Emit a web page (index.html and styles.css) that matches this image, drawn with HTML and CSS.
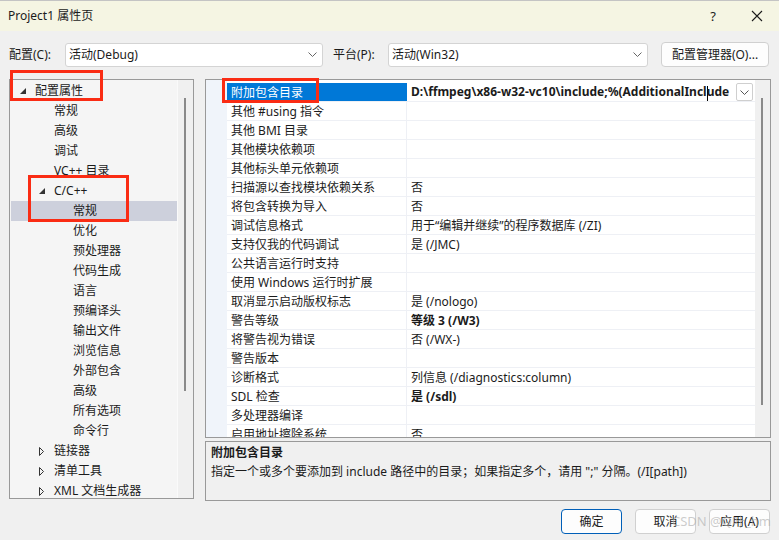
FILE: index.html
```html
<!DOCTYPE html>
<html lang="zh-CN">
<head>
<meta charset="utf-8">
<title>Project1 属性页</title>
<link rel="stylesheet" href="styles.css">
</head>
<body>
<div class="titlebar">
  <span class="title">Project1 属性页</span>
  <span class="tb-btn">?</span>
  <span class="tb-btn"><svg width="12" height="12" viewBox="0 0 12 12"><path d="M1 1L11 11M11 1L1 11" stroke="#1b1b1b" stroke-width="1.1" fill="none"/></svg></span>
</div>
<div class="content">
  <div class="toprow">
    <span class="lbl lbl-cfg">配置(C):</span>
    <div class="combo combo-cfg"><span>活动(Debug)</span><svg class="chev" width="9" height="5" viewBox="0 0 9 5"><path d="M0.5 0.5L4.5 4.5L8.5 0.5" stroke="#666" fill="none"/></svg></div>
    <span class="lbl lbl-plat">平台(P):</span>
    <div class="combo combo-plat"><span>活动(Win32)</span><svg class="chev" width="9" height="5" viewBox="0 0 9 5"><path d="M0.5 0.5L4.5 4.5L8.5 0.5" stroke="#666" fill="none"/></svg></div>
    <button class="btn btn-mgr">配置管理器(O)...</button>
  </div>
  <div class="main">
    <div class="tree">
      <div class="tree-list">
        <div class="node l0"><span class="tog"><svg width="6" height="6" viewBox="0 0 6 6"><polygon points="6,0 6,6 0,6" fill="#333"/></svg></span>配置属性</div>
        <div class="node l1"><span class="tog"></span>常规</div>
        <div class="node l1"><span class="tog"></span>高级</div>
        <div class="node l1"><span class="tog"></span>调试</div>
        <div class="node l1"><span class="tog"></span>VC++ 目录</div>
        <div class="node l1"><span class="tog"><svg width="6" height="6" viewBox="0 0 6 6"><polygon points="6,0 6,6 0,6" fill="#333"/></svg></span>C/C++</div>
        <div class="node l2 sel"><span class="tog"></span>常规</div>
        <div class="node l2"><span class="tog"></span>优化</div>
        <div class="node l2"><span class="tog"></span>预处理器</div>
        <div class="node l2"><span class="tog"></span>代码生成</div>
        <div class="node l2"><span class="tog"></span>语言</div>
        <div class="node l2"><span class="tog"></span>预编译头</div>
        <div class="node l2"><span class="tog"></span>输出文件</div>
        <div class="node l2"><span class="tog"></span>浏览信息</div>
        <div class="node l2"><span class="tog"></span>外部包含</div>
        <div class="node l2"><span class="tog"></span>高级</div>
        <div class="node l2"><span class="tog"></span>所有选项</div>
        <div class="node l2"><span class="tog"></span>命令行</div>
        <div class="node l1"><span class="tog"><svg width="6" height="9" viewBox="0 0 6 9"><polygon points="0.5,0.5 4.5,4.5 0.5,8.5" fill="none" stroke="#333"/></svg></span>链接器</div>
        <div class="node l1"><span class="tog"><svg width="6" height="9" viewBox="0 0 6 9"><polygon points="0.5,0.5 4.5,4.5 0.5,8.5" fill="none" stroke="#333"/></svg></span>清单工具</div>
        <div class="node l1"><span class="tog"><svg width="6" height="9" viewBox="0 0 6 9"><polygon points="0.5,0.5 4.5,4.5 0.5,8.5" fill="none" stroke="#333"/></svg></span>XML 文档生成器</div>
      </div>
      <div class="vscroll"><div class="thumb tree-thumb"></div></div>
    </div>
    <div class="right">
      <div class="grid">
        <div class="gutter"></div>
        <div class="rows">
          <div class="row sel"><div class="name">附加包含目录</div><div class="val"><span class="val-text">D:\ffmpeg\x86-w32-vc10\include;%(AdditionalIncl<span class="caret"></span>ude</span><span class="dd"><svg width="9" height="5" viewBox="0 0 9 5"><path d="M0.5 0.5L4.5 4.5L8.5 0.5" stroke="#555" fill="none"/></svg></span></div></div>
          <div class="row"><div class="name">其他 #using 指令</div><div class="val"></div></div>
          <div class="row"><div class="name">其他 BMI 目录</div><div class="val"></div></div>
          <div class="row"><div class="name">其他模块依赖项</div><div class="val"></div></div>
          <div class="row"><div class="name">其他标头单元依赖项</div><div class="val"></div></div>
          <div class="row"><div class="name">扫描源以查找模块依赖关系</div><div class="val">否</div></div>
          <div class="row"><div class="name">将包含转换为导入</div><div class="val">否</div></div>
          <div class="row"><div class="name">调试信息格式</div><div class="val">用于“编辑并继续”的程序数据库 (/ZI)</div></div>
          <div class="row"><div class="name">支持仅我的代码调试</div><div class="val">是 (/JMC)</div></div>
          <div class="row"><div class="name">公共语言运行时支持</div><div class="val"></div></div>
          <div class="row"><div class="name">使用 Windows 运行时扩展</div><div class="val"></div></div>
          <div class="row"><div class="name">取消显示启动版权标志</div><div class="val">是 (/nologo)</div></div>
          <div class="row"><div class="name">警告等级</div><div class="val bold">等级 3 (/W3)</div></div>
          <div class="row"><div class="name">将警告视为错误</div><div class="val">否 (/WX-)</div></div>
          <div class="row"><div class="name">警告版本</div><div class="val"></div></div>
          <div class="row"><div class="name">诊断格式</div><div class="val">列信息 (/diagnostics:column)</div></div>
          <div class="row"><div class="name">SDL 检查</div><div class="val bold">是 (/sdl)</div></div>
          <div class="row"><div class="name">多处理器编译</div><div class="val"></div></div>
          <div class="row"><div class="name">启用地址擦除系统</div><div class="val">否</div></div>
        </div>
        <div class="vscroll grid-scroll"><div class="thumb grid-thumb"></div></div>
      </div>
      <div class="desc">
        <div class="desc-title">附加包含目录</div>
        <div class="desc-text">指定一个或多个要添加到 include 路径中的目录；如果指定多个，请用 ";" 分隔。(/I[path])</div>
      </div>
    </div>
  </div>
  <div class="footer">
    <button class="btn btn-ok">确定</button>
    <button class="btn">取消</button>
    <button class="btn">应用(A)</button>
  </div>
</div>
<div class="mark mark1"></div>
<div class="mark mark2"></div>
<div class="mark mark3"></div>
<div class="watermark">CSDN @Q叶_hm</div>
</body>
</html>
```
FILE: styles.css
```css
* { box-sizing: border-box; }
html, body { margin: 0; padding: 0; }
body {
  width: 779px;
  height: 540px;
  overflow: hidden;
  position: relative;
  background: #f0f0f0;
  color: #1b1b1b;
  font-family: "Noto Sans", "Noto Sans CJK SC", sans-serif;
  font-size: 12px;
  line-height: 16px;
}
.titlebar {
  height: 31px;
  background: #f5f5e3;
  border-top: 1px solid #c4c4c4;
  display: flex;
  align-items: center;
  padding-left: 8px;
}
.title { flex: 1; font-size: 12px; }
.tb-btn {
  width: 44px;
  display: flex;
  justify-content: center;
  align-items: center;
  font-size: 13px;
}
.content { padding: 11px 8px 0 9px; }
.toprow { display: flex; align-items: center; height: 25px; }
.lbl { flex: none; }
.lbl-cfg { width: 56px; }
.lbl-plat { width: 55px; margin-left: 10px; }
.combo {
  flex: none;
  height: 24px;
  background: #fff;
  border: 1px solid #d4d4d4;
  border-radius: 3px;
  display: flex;
  align-items: center;
  justify-content: space-between;
  padding: 0 5px 0 3px;
}
.combo-cfg { width: 258px; }
.combo-plat { width: 260px; }
.btn {
  font: inherit;
  color: #1b1b1b;
  height: 25px;
  background: #fdfdfd;
  border: 1px solid #d0d0d0;
  border-radius: 4px;
  padding: 0;
  margin: 0;
}
.btn-mgr { width: 108px; margin-left: 13px; }
.main { display: flex; margin-top: 12px; }
.tree {
  width: 186px;
  height: 420px;
  border: 1px solid #999;
  background: #f5f5f5;
  display: flex;
  overflow: hidden;
}
.tree-list { flex: 1; padding: 1px 0 0 1px; }
.node {
  height: 20px;
  display: flex;
  align-items: center;
  white-space: nowrap;
}
.node.l0 { padding-left: 9px; }
.node.l1 { padding-left: 28px; }
.node.l2 { padding-left: 47px; }
.node.sel { background: #cdd0dc; }
.tog { width: 15px; flex: none; display: flex; align-items: center; }
.vscroll {
  width: 16px;
  flex: none;
  background: #f0f0f0;
  border-left: 1px solid #fafafa;
  position: relative;
}
.thumb { position: absolute; width: 2px; background: #8a8a8a; }
.tree-thumb { left: 6px; top: 18px; height: 293px; }
.right { margin-left: 11px; width: 566px; }
.grid {
  height: 359px;
  border: 1px solid #999;
  background: #fff;
  display: flex;
  overflow: hidden;
}
.gutter { width: 21px; flex: none; background: #f0f4fa; }
.rows { width: 528px; flex: none; padding-top: 3px; }
.row {
  display: grid;
  grid-template-columns: 180px 348px;
  height: 19px;
  border-bottom: 1px solid #eef0f5;
}
.name, .val {
  padding-left: 4px;
  padding-top: 1px;
  display: flex;
  align-items: center;
  white-space: nowrap;
  overflow: hidden;
}
.name { border-right: 1px solid #eef0f5; }
.row.sel .name { background: #0078d7; color: #fff; border-right-color: #0078d7; }
.row.sel .val { font-weight: bold; padding-right: 2px; padding-top: 0; }
.val-text { flex: 1; overflow: hidden; white-space: nowrap; padding-top: 1px; }
.caret {
  display: inline-block;
  width: 1px;
  height: 15px;
  background: #000;
  vertical-align: middle;
  margin-right: -1px;
}
.dd {
  width: 17px;
  height: 18px;
  flex: none;
  border: 1px solid #cfcfcf;
  border-radius: 2px;
  background: #fff;
  display: flex;
  align-items: center;
  justify-content: center;
}
.bold { font-weight: bold; }
.grid-scroll { width: 15px; border-left: none; }
.grid-thumb { left: 6px; top: 18px; height: 307px; }
.desc {
  margin-top: 3px;
  height: 60px;
  border: 1px solid #999;
  background: #f0f0f0;
  padding: 1px 5px;
  line-height: 19px;
}
.desc-title { font-weight: bold; }
.footer {
  display: flex;
  justify-content: flex-end;
  gap: 13px;
  margin-top: 8px;
  padding-right: 1px;
}
.footer .btn { width: 61px; }
.btn-ok { border: 1px solid #005fb8; }
.mark {
  position: absolute;
  border: 3px solid #fa2c14;
}
.mark1 { left: 10px; top: 70px; width: 93px; height: 31px; }
.mark2 { left: 28px; top: 175px; width: 101px; height: 47px; }
.mark3 { left: 222px; top: 78px; width: 97px; height: 25px; }
.watermark {
  position: absolute;
  left: 672px;
  top: 513px;
  font-size: 13px;
  color: rgba(170, 170, 170, 0.6);
  pointer-events: none;
}
```
